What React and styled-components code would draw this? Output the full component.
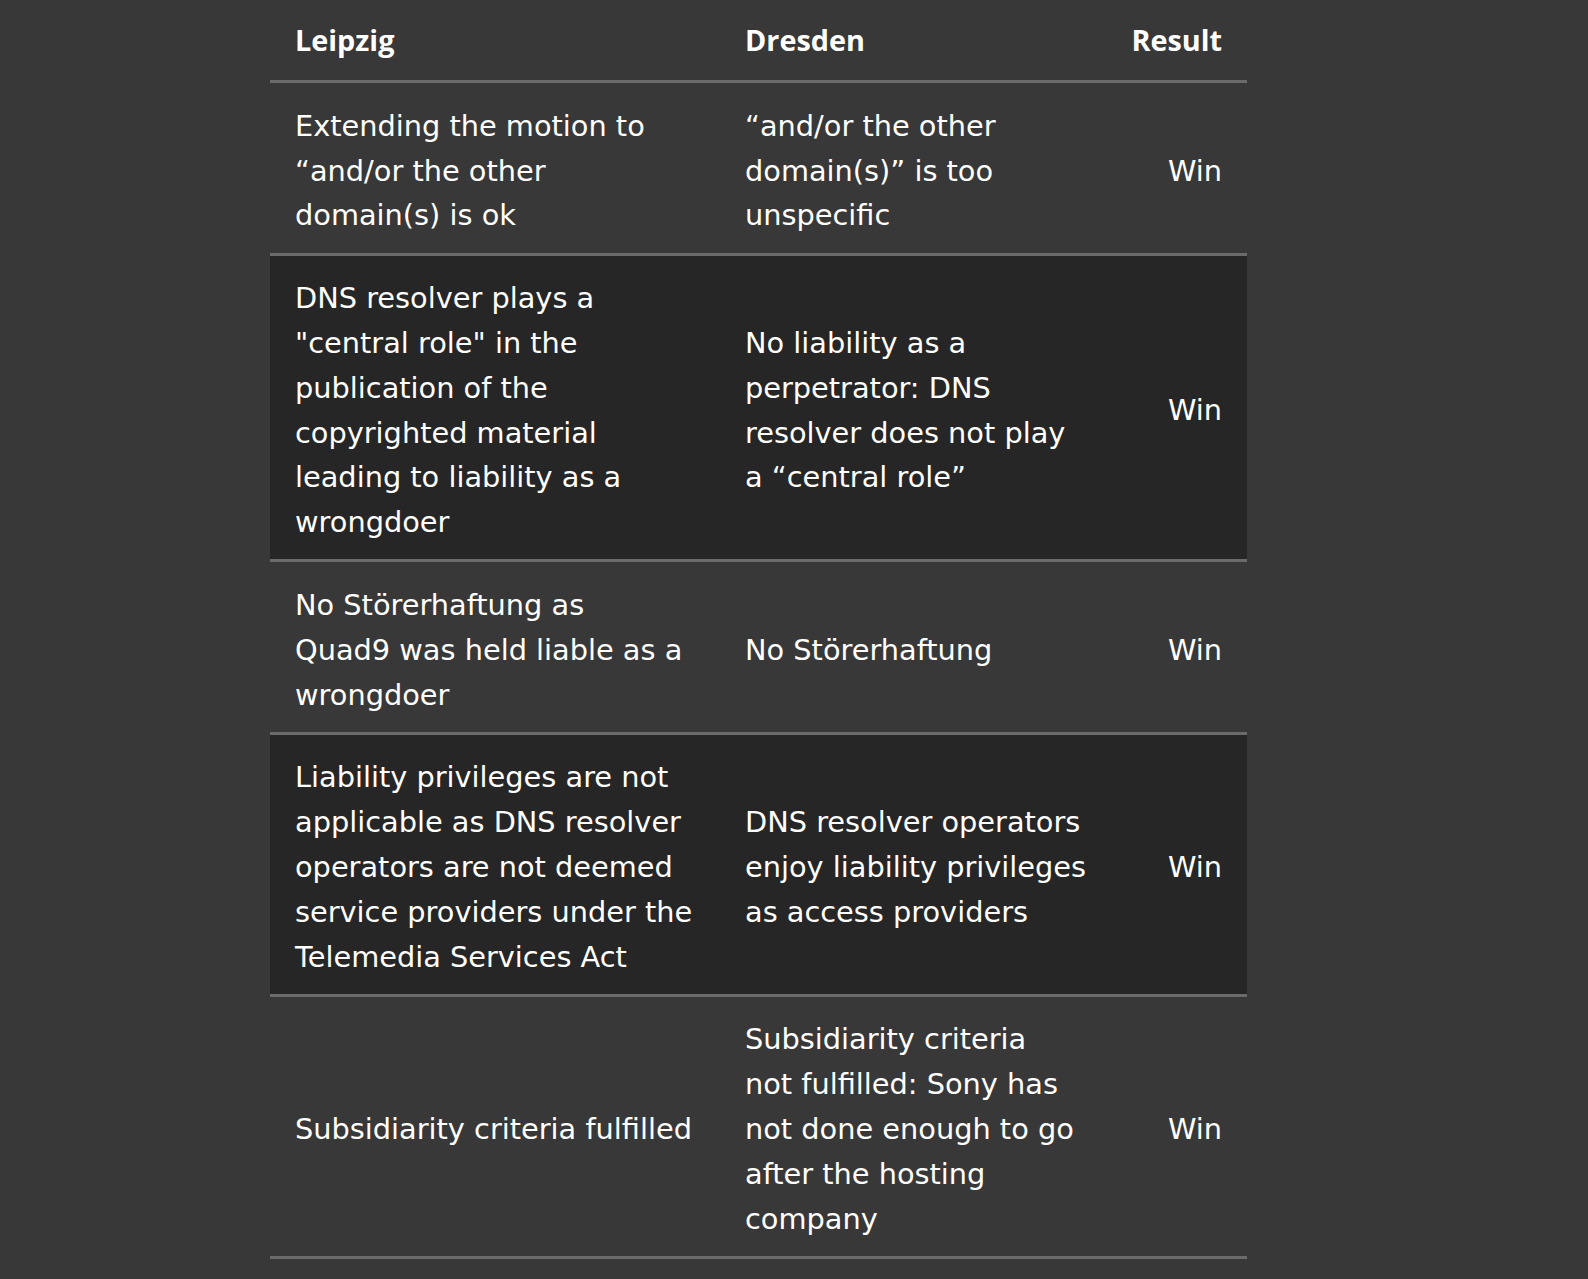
import React from "react";
import styled, { createGlobalStyle } from "styled-components";

const Global = createGlobalStyle`
  html, body { margin: 0; padding: 0; background: #383838; }
  body { font-family: "DejaVu Sans", "Open Sans", sans-serif; color: #ffffff; }
`;

const Page = styled.main`
  padding: 0 0 0 270px;
  min-height: 1279px;
  box-sizing: border-box;
`;

const Table = styled.table`
  width: 977px;
  border-collapse: collapse;
  table-layout: fixed;
  font-size: 28.8px;
  line-height: 44.8px;
`;

const Col = styled.col`
  width: ${(p) => p.$w}px;
`;

const HeadCell = styled.th`
  font-family: "Open Sans", "DejaVu Sans", sans-serif;
  font-weight: 700;
  text-align: ${(p) => p.$align || "left"};
  padding: 17.5px 25px 18px;
  border-bottom: 3px solid #6b6b6b;
  white-space: nowrap;
`;

const Row = styled.tr`
  background: ${(p) => (p.$dark ? "#262626" : "transparent")};
`;

const Cell = styled.td`
  text-align: ${(p) => p.$align || "left"};
  vertical-align: middle;
  padding: 20.5px 25px 14.5px;
  border-bottom: 3px solid #6b6b6b;
  white-space: nowrap;
`;

const Line = styled.span`
  display: block;
`;

const rows = [
  {
    a: ["Extending the motion to", "\u201Cand/or the other", "domain(s) is ok"],
    b: ["\u201Cand/or the other", "domain(s)\u201D is too", "unspecific"],
  },
  {
    a: [
      "DNS resolver plays a",
      "\"central role\" in the",
      "publication of the",
      "copyrighted material",
      "leading to liability as a",
      "wrongdoer",
    ],
    b: ["No liability as a", "perpetrator: DNS", "resolver does not play", "a \u201Ccentral role\u201D"],
  },
  {
    a: ["No Störerhaftung as", "Quad9 was held liable as a", "wrongdoer"],
    b: ["No Störerhaftung"],
  },
  {
    a: [
      "Liability privileges are not",
      "applicable as DNS resolver",
      "operators are not deemed",
      "service providers under the",
      "Telemedia Services Act",
    ],
    b: ["DNS resolver operators", "enjoy liability privileges", "as access providers"],
  },
  {
    a: ["Subsidiarity criteria fulfilled"],
    b: [
      "Subsidiarity criteria",
      "not fulfilled: Sony has",
      "not done enough to go",
      "after the hosting",
      "company",
    ],
  },
];

const Lines = ({ items }) => items.map((t, i) => <Line key={i}>{t}</Line>);

export default function App() {
  return (
    <>
      <Global />
      <Page>
        <Table>
          <colgroup>
            <Col $w={450} />
            <Col $w={380} />
            <Col $w={147} />
          </colgroup>
          <thead>
            <tr>
              <HeadCell>Leipzig</HeadCell>
              <HeadCell>Dresden</HeadCell>
              <HeadCell $align="right">Result</HeadCell>
            </tr>
          </thead>
          <tbody>
            {rows.map((r, i) => (
              <Row key={i} $dark={i % 2 === 1}>
                <Cell>
                  <Lines items={r.a} />
                </Cell>
                <Cell>
                  <Lines items={r.b} />
                </Cell>
                <Cell $align="right">Win</Cell>
              </Row>
            ))}
          </tbody>
        </Table>
      </Page>
    </>
  );
}
